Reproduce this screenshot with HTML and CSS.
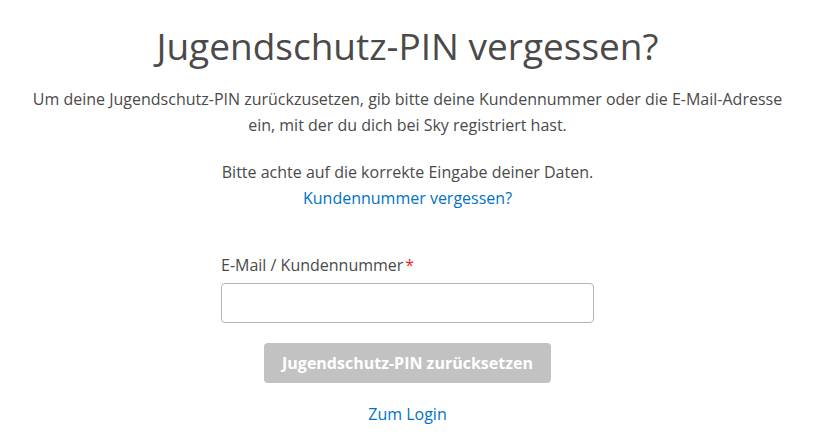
FILE: index.html
```html
<!DOCTYPE html>
<html lang="de">
<head>
<meta charset="utf-8">
<title>Jugendschutz-PIN vergessen?</title>
<link rel="stylesheet" href="styles.css">
</head>
<body>
<main class="page">
  <h1 class="title">Jugendschutz-PIN vergessen?</h1>
  <p class="intro">Um deine Jugendschutz-PIN zurückzusetzen, gib bitte deine Kundennummer oder die E-Mail-Adresse<br>ein, mit der du dich bei Sky registriert hast.</p>
  <p class="hint">Bitte achte auf die korrekte Eingabe deiner Daten.<br><a class="link" href="#">Kundennummer vergessen?</a></p>
  <form class="form">
    <label class="label" for="id">E-Mail / Kundennummer<span class="req">*</span></label>
    <input class="input" id="id" type="text">
    <button class="btn" type="button" disabled>Jugendschutz-PIN zurücksetzen</button>
    <a class="link login" href="#">Zum Login</a>
  </form>
</main>
</body>
</html>
```
FILE: styles.css
```css
html, body { margin: 0; padding: 0; background: #fff; }
body {
  font-family: "Open Sans", "Noto Sans", sans-serif;
  color: #4a4a4a;
}
.page {
  display: flex;
  flex-direction: column;
  align-items: center;
  text-align: center;
  padding-top: 20px;
}
.title {
  margin: 0;
  font-size: 37px;
  font-weight: 400;
  line-height: 52px;
  color: #4a4a4a;
}
.intro {
  margin: 14px 0 0;
  font-size: 16px;
  line-height: 26px;
}
.hint {
  margin: 21px 0 0;
  font-size: 16px;
  line-height: 26px;
}
.link { color: #0072c9; text-decoration: none; }
.form {
  margin-top: 43px;
  width: 373px;
  display: flex;
  flex-direction: column;
  align-items: center;
}
.label {
  align-self: flex-start;
  font-size: 16px;
  line-height: 22px;
}
.req { color: #e8282c; margin-left: 2px; }
.input {
  margin-top: 7px;
  width: 100%;
  height: 40px;
  box-sizing: border-box;
  border: 1px solid #b5b5b5;
  border-radius: 4px;
  font: inherit;
}
.btn {
  margin-top: 20px;
  width: 287px;
  height: 40px;
  border: 0;
  border-radius: 4px;
  background: #c2c2c2;
  color: #fff;
  font-family: inherit;
  font-size: 16px;
  font-weight: 700;
}
.login {
  margin-top: 20px;
  font-size: 16px;
  line-height: 22px;
}
```
